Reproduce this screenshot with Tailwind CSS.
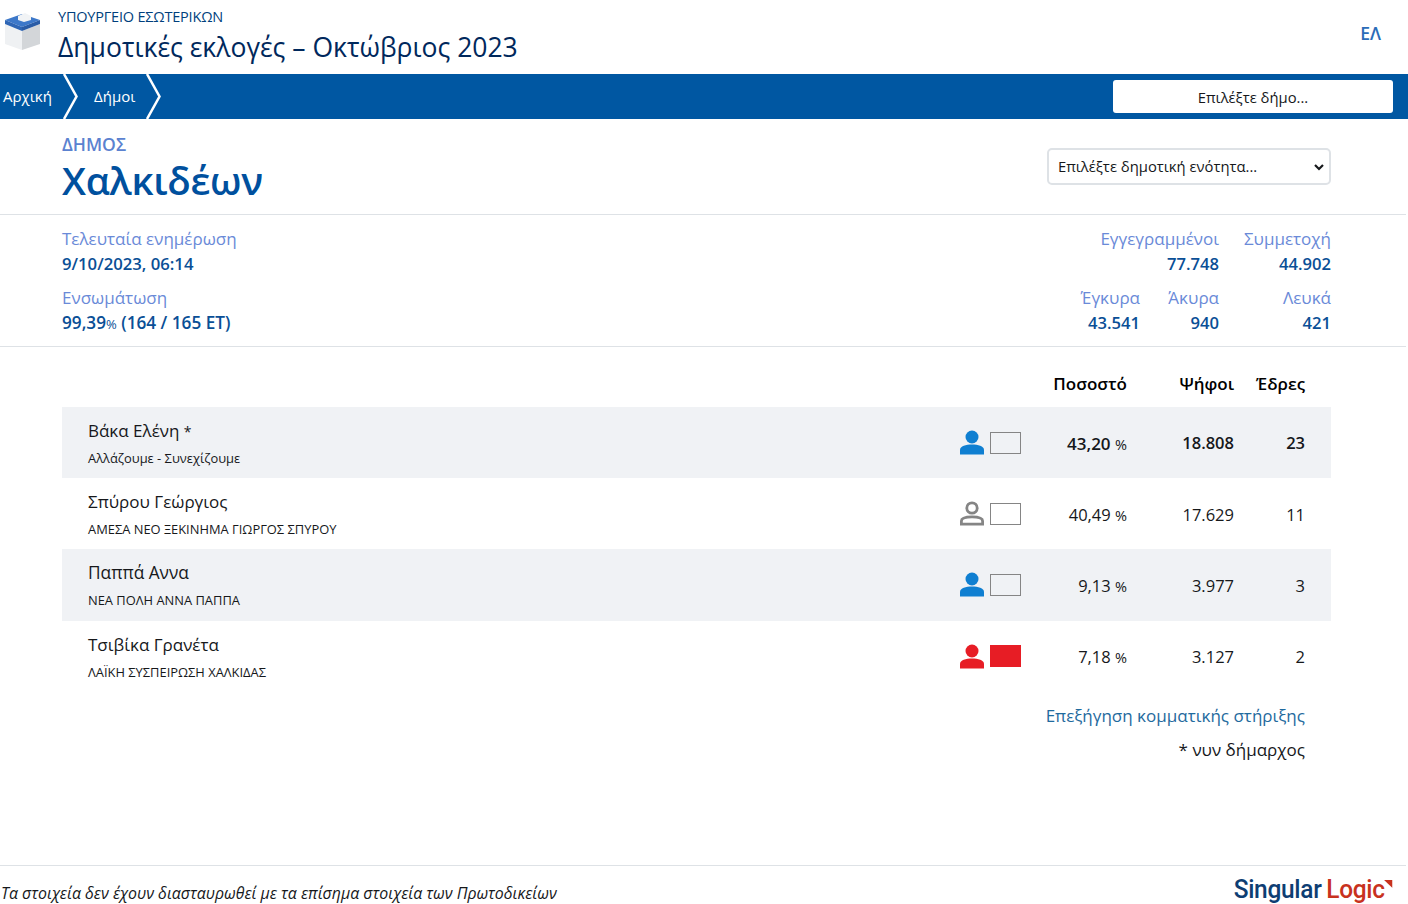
<!DOCTYPE html>
<html lang="el">
<head>
  <meta charset="UTF-8">
  <title>Δημοτικές εκλογές</title>
  <script src="https://cdn.jsdelivr.net/npm/@tailwindcss/browser@4"></script>
</head>
<body class="bg-white font-['Open_Sans',sans-serif] text-[#16181b] overflow-hidden">
  <div class="h-[904px] w-[1408px] flex flex-col overflow-hidden">
    <!-- header -->
    <header class="h-[74px] flex items-start pl-[4px] pr-[27px]">
      <svg class="w-[37px] h-[38px] mt-[12px]" viewBox="0 0 37 38">
        <polygon points="1,12 18,19 18,38 1,32" fill="#eff1f3"/>
        <polygon points="18,19 36,12 36,32 18,38" fill="#d3d6d9"/>
        <polygon points="1,8 18,2 36,8 18,15" fill="#3d78c9"/>
        <polygon points="1,8 18,15 18,19 1,12" fill="#2f66b5"/>
        <polygon points="18,15 36,8 36,12 18,19" fill="#2a5ca6"/>
        <polygon points="14,4 21,1 27,4 27,8 20,10 14,8" fill="#f1f3f5"/>
      </svg>
      <div class="ml-[17px] flex-1">
        <div class="text-[14.5px] leading-[20px] mt-[7px] text-[#003f7d] tracking-[-0.2px]">ΥΠΟΥΡΓΕΙΟ ΕΣΩΤΕΡΙΚΩΝ</div>
        <h1 class="text-[26.5px] leading-[34px] mt-[3px] font-medium text-[#00285c]">Δημοτικές εκλογές – Οκτώβριος 2023</h1>
      </div>
      <a class="text-[#2b6cb8] text-[17.5px] font-semibold mt-[20px]">ΕΛ</a>
    </header>

    <!-- nav -->
    <nav class="h-[45px] bg-[#0057a2] flex items-center pr-[15px] text-white text-[15px]">
      <span class="ml-[3px] w-[60px]">Αρχική</span>
      <svg class="w-[15px] h-[45px]" viewBox="0 0 15 45"><path d="M1 0 L13.500 22.500 L1 45" fill="none" stroke="#fff" stroke-width="2.500"/></svg>
      <span class="ml-[16px] w-[52px]">Δήμοι</span>
      <svg class="w-[15px] h-[45px]" viewBox="0 0 15 45"><path d="M1 0 L13.500 22.500 L1 45" fill="none" stroke="#fff" stroke-width="2.500"/></svg>
      <div class="ml-auto w-[280px] h-[33px] bg-white rounded-[3px] flex items-center justify-center text-[#16181b] text-[14.8px] pt-[1px]">Επιλέξτε δήμο...</div>
    </nav>

    <!-- title -->
    <section class="h-[96px] w-[1406px] border-b border-[#dee2e6] pl-[62px] pr-[75px] flex justify-between">
      <div>
        <div class="text-[17.5px] leading-[20px] mt-[15px] font-semibold text-[#5b82d0]">ΔΗΜΟΣ</div>
        <h2 class="text-[38.5px] leading-[46px] mt-[3px] font-semibold tracking-[-0.3px] text-[#00509e]">Χαλκιδέων</h2>
      </div>
      <div class="mt-[29px] w-[284px] h-[37px] border-2 border-[#dee2e6] rounded-[5px] flex items-center justify-between pl-[9px] pr-[4px] text-[14.8px]">
        <span>Επιλέξτε δημοτική ενότητα...</span>
        <svg class="w-[12px] h-[12px]" viewBox="0 0 12 12"><path d="M2 4 L6 8 L10 4" fill="none" stroke="#16181b" stroke-width="2.200"/></svg>
      </div>
    </section>

    <!-- stats -->
    <section class="h-[132px] w-[1406px] border-b border-[#dee2e6] pl-[62px] pr-[75px] pt-[12px] flex justify-between text-[17px] leading-[24px]">
      <div>
        <div class="text-[#6a8ad8]">Τελευταία ενημέρωση</div>
        <div class="text-[#0a4f96] font-semibold text-[16.7px] mt-[1px]">9/10/2023, 06:14</div>
        <div class="text-[#6a8ad8] mt-[10px]">Ενσωμάτωση</div>
        <div class="text-[#0a4f96] font-semibold text-[17.2px] mt-[1px]">99,39<span class="text-[13px] font-normal">%</span> (164 / 165 ΕΤ)</div>
      </div>
      <div class="grid grid-cols-[64px_79px_112px] content-start text-right">
        <div class="col-span-2">
          <div class="text-[#6a8ad8]">Εγγεγραμμένοι</div>
          <div class="text-[#0a4f96] font-semibold text-[16.6px] mt-[1px]">77.748</div>
        </div>
        <div>
          <div class="text-[#6a8ad8]">Συμμετοχή</div>
          <div class="text-[#0a4f96] font-semibold text-[16.6px] mt-[1px]">44.902</div>
        </div>
        <div class="mt-[10px]">
          <div class="text-[#6a8ad8]">Έγκυρα</div>
          <div class="text-[#0a4f96] font-semibold text-[16.6px] mt-[1px]">43.541</div>
        </div>
        <div class="mt-[10px]">
          <div class="text-[#6a8ad8]">Άκυρα</div>
          <div class="text-[#0a4f96] font-semibold text-[16.6px] mt-[1px]">940</div>
        </div>
        <div class="mt-[10px]">
          <div class="text-[#6a8ad8]">Λευκά</div>
          <div class="text-[#0a4f96] font-semibold text-[16.6px] mt-[1px]">421</div>
        </div>
      </div>
    </section>

    <!-- results -->
    <main class="flex-1 pl-[62px] pr-[77px]">
      <div class="h-[60px] flex items-end pb-[11px] pr-[26px] text-[17px] font-semibold text-right text-black">
        <div class="ml-auto w-[120px]">Ποσοστό</div>
        <div class="w-[107px]">Ψήφοι</div>
        <div class="w-[71px]">Έδρες</div>
      </div>

      <div class="h-[71px] bg-[#f0f2f5] flex items-center pl-[26px] pr-[26px]">
        <div class="flex-1">
          <div class="text-[17px] leading-[24px] font-medium">Βάκα Ελένη <span class="font-normal text-[14px]">*</span></div>
          <div class="text-[12.9px] leading-[16px] mt-[6px] font-medium">Αλλάζουμε - Συνεχίζουμε</div>
        </div>
        <svg class="w-[26px] h-[26px] mr-[5px]" viewBox="0 0 26 26"><circle cx="13" cy="7" r="6.500" fill="#0f7fd1"/><path d="M1 24.500 V20 C1 16 7 14.500 13 14.500 S25 16 25 20 V24.500 Z" fill="#0f7fd1"/></svg>
        <div class="w-[31px] h-[22px] border border-[#858585]"></div>
        <div class="w-[106px] text-right text-[17px] font-semibold pt-[2px]">43,20 <span class="text-[14.5px] font-normal">%</span></div>
        <div class="w-[107px] text-right text-[16.5px] font-semibold pt-[2px]">18.808</div>
        <div class="w-[71px] text-right text-[16.5px] font-semibold pt-[2px]">23</div>
      </div>

      <div class="h-[71px] flex items-center pl-[26px] pr-[26px]">
        <div class="flex-1">
          <div class="text-[17px] leading-[24px] -mt-[1px]">Σπύρου Γεώργιος</div>
          <div class="text-[12.9px] leading-[16px] mt-[7px]">ΑΜΕΣΑ ΝΕΟ ΞΕΚΙΝΗΜΑ ΓΙΩΡΓΟΣ ΣΠΥΡΟΥ</div>
        </div>
        <svg class="w-[26px] h-[26px] mr-[5px]" viewBox="0 0 26 26"><circle cx="13" cy="7" r="5.200" fill="none" stroke="#858585" stroke-width="2.800"/><path d="M2.400 23.100 V20 C2.400 17 8 15.900 13 15.900 S23.600 17 23.600 20 V23.100 Z" fill="none" stroke="#858585" stroke-width="2.800"/></svg>
        <div class="w-[31px] h-[22px] border border-[#858585]"></div>
        <div class="w-[106px] text-right text-[16.5px] pt-[3px]">40,49 <span class="text-[14.5px]">%</span></div>
        <div class="w-[107px] text-right text-[16.5px] pt-[3px]">17.629</div>
        <div class="w-[71px] text-right text-[16.5px] pt-[3px]">11</div>
      </div>

      <div class="h-[72px] bg-[#f0f2f5] flex items-center pl-[26px] pr-[26px]">
        <div class="flex-1">
          <div class="text-[17.3px] leading-[24px] -mt-[1px]">Παππά Αννα</div>
          <div class="text-[12.9px] leading-[16px] mt-[7px]">ΝΕΑ ΠΟΛΗ ΑΝΝΑ ΠΑΠΠΑ</div>
        </div>
        <svg class="w-[26px] h-[26px] mr-[5px]" viewBox="0 0 26 26"><circle cx="13" cy="7" r="6.500" fill="#0f7fd1"/><path d="M1 24.500 V20 C1 16 7 14.500 13 14.500 S25 16 25 20 V24.500 Z" fill="#0f7fd1"/></svg>
        <div class="w-[31px] h-[22px] border border-[#858585]"></div>
        <div class="w-[106px] text-right text-[16.5px] pt-[3px]">9,13 <span class="text-[14.5px]">%</span></div>
        <div class="w-[107px] text-right text-[16.5px] pt-[3px]">3.977</div>
        <div class="w-[71px] text-right text-[16.5px] pt-[3px]">3</div>
      </div>

      <div class="h-[71px] flex items-center pl-[26px] pr-[26px]">
        <div class="flex-1">
          <div class="text-[17px] leading-[24px] -mt-[1px]">Τσιβίκα Γρανέτα</div>
          <div class="text-[12.9px] leading-[16px] mt-[7px]">ΛΑΪΚΗ ΣΥΣΠΕΙΡΩΣΗ ΧΑΛΚΙΔΑΣ</div>
        </div>
        <svg class="w-[26px] h-[26px] mr-[5px]" viewBox="0 0 26 26"><circle cx="13" cy="7" r="6.500" fill="#e71d25"/><path d="M1 24.500 V20 C1 16 7 14.500 13 14.500 S25 16 25 20 V24.500 Z" fill="#e71d25"/></svg>
        <div class="w-[31px] h-[22px] bg-[#e71d25] -mt-[1px]"></div>
        <div class="w-[106px] text-right text-[16.5px] pt-[2px]">7,18 <span class="text-[14.5px]">%</span></div>
        <div class="w-[107px] text-right text-[16.5px] pt-[2px]">3.127</div>
        <div class="w-[71px] text-right text-[16.5px] pt-[2px]">2</div>
      </div>

      <div class="pr-[26px] mt-[12px] text-right text-[17px] leading-[24px]">
        <div class="text-[#1f6a9e]">Επεξήγηση κομματικής στήριξης</div>
        <div class="mt-[10px]">* νυν δήμαρχος</div>
      </div>
    </main>

    <!-- footer -->
    <footer class="h-[39px] w-[1406px] border-t border-[#dee2e6] flex items-start justify-between pr-[21px]">
      <div class="italic text-[15.9px] leading-[20px] mt-[17px] ml-[1px]">Τα στοιχεία δεν έχουν διασταυρωθεί με τα επίσημα στοιχεία των Πρωτοδικείων</div>
      <div class="relative mt-[8px] flex gap-[5px] text-[26px] leading-[30px] tracking-[-0.3px] font-['Roboto',sans-serif] font-medium scale-x-[0.94] origin-right">
        <span class="text-[#0e3e73]">Singular</span><span class="text-[#c8321e]">Logic</span>
        <svg class="absolute right-[-8px] top-[6px] w-[9px] h-[8px]" viewBox="0 0 9 8"><polygon points="0,0 9,0 9,8" fill="#c8321e"/></svg>
      </div>
    </footer>
  </div>
</body>
</html>
